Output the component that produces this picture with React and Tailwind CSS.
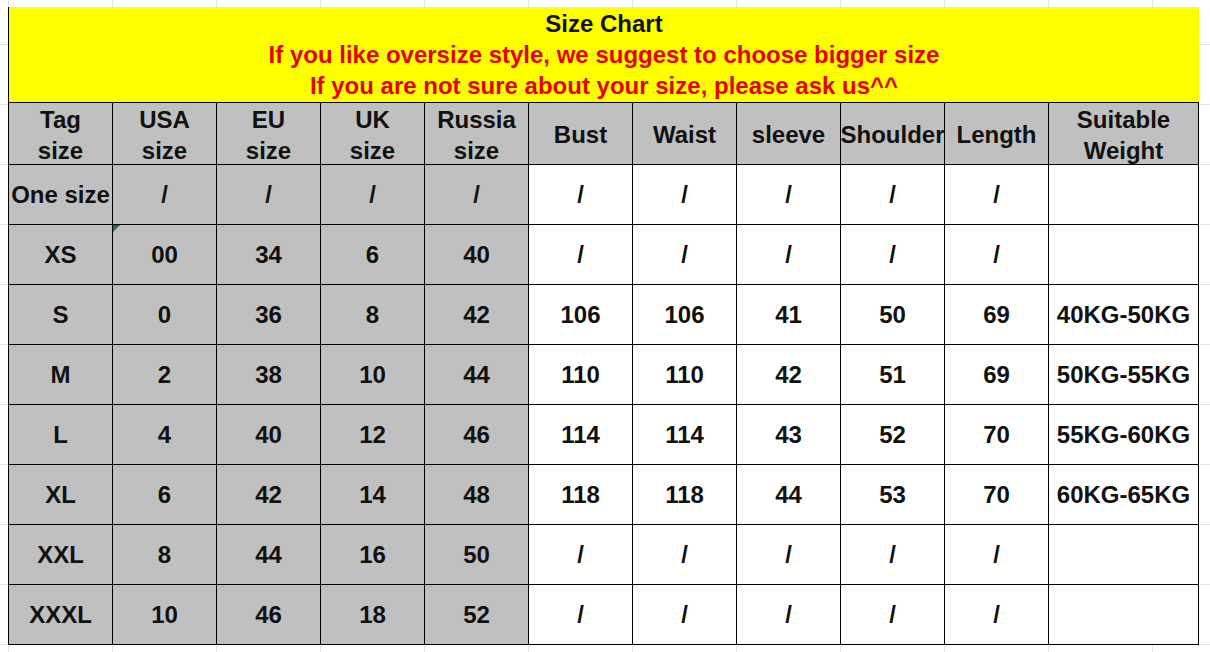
import React from 'react';

const headers = [
  ['Tag', 'size'],
  ['USA', 'size'],
  ['EU', 'size'],
  ['UK', 'size'],
  ['Russia', 'size'],
  ['Bust'],
  ['Waist'],
  ['sleeve'],
  ['Shoulder'],
  ['Length'],
  ['Suitable', 'Weight'],
];

const rows = [
  ['One size', '/', '/', '/', '/', '/', '/', '/', '/', '/', ''],
  ['XS', '00', '34', '6', '40', '/', '/', '/', '/', '/', ''],
  ['S', '0', '36', '8', '42', '106', '106', '41', '50', '69', '40KG-50KG'],
  ['M', '2', '38', '10', '44', '110', '110', '42', '51', '69', '50KG-55KG'],
  ['L', '4', '40', '12', '46', '114', '114', '43', '52', '70', '55KG-60KG'],
  ['XL', '6', '42', '14', '48', '118', '118', '44', '53', '70', '60KG-65KG'],
  ['XXL', '8', '44', '16', '50', '/', '/', '/', '/', '/', ''],
  ['XXXL', '10', '46', '18', '52', '/', '/', '/', '/', '/', ''],
];

function App() {
  return (
    <div className="w-[1210px] h-[652px] overflow-hidden bg-white bg-[repeating-linear-gradient(90deg,#e2e2e2_0_1px,transparent_1px_104px),repeating-linear-gradient(180deg,#e2e2e2_0_1px,transparent_1px_60px)] bg-[position:8px_0px,0px_44px] pt-[7px] pl-[8px] font-['Liberation_Sans',Arial,sans-serif] font-bold text-[24px] text-[#111]">
      {/* yellow banner */}
      <div className="w-[1191px] h-[95px] bg-[#ffff00] border-l border-black flex flex-col items-center justify-center leading-[31px]">
        <p className="text-[#111]">Size Chart</p>
        <p className="text-[#e60000]">If you like oversize style, we suggest to choose bigger size</p>
        <p className="text-[#e60000]">If you are not sure about your size, please ask us^^</p>
      </div>

      {/* table */}
      <div className="w-[1191px] grid grid-cols-[repeat(10,103px)_149px] grid-rows-[61px_repeat(8,59px)] gap-px bg-black border border-black">
        {headers.map((h, i) => (
          <div key={i} className="bg-[#c0c0c0] flex flex-col items-center justify-center leading-[31px] whitespace-nowrap pt-[2px]">
            {h.map((t, j) => (
              <span key={j}>{t}</span>
            ))}
          </div>
        ))}
        {rows.map((r, ri) =>
          r.map((c, ci) => (
            <div
              key={ri + '-' + ci}
              className={
                'relative flex items-center justify-center whitespace-nowrap ' +
                (ci < 5 ? 'bg-[#c0c0c0]' : 'bg-white')
              }
            >
              {ri === 1 && ci === 1 && (
                <div className="absolute top-0 left-0 w-[7px] h-[7px] bg-[#217346] [clip-path:polygon(0_0,100%_0,0_100%)]" />
              )}
              {c}
            </div>
          ))
        )}
      </div>
    </div>
  );
}

export default App;
